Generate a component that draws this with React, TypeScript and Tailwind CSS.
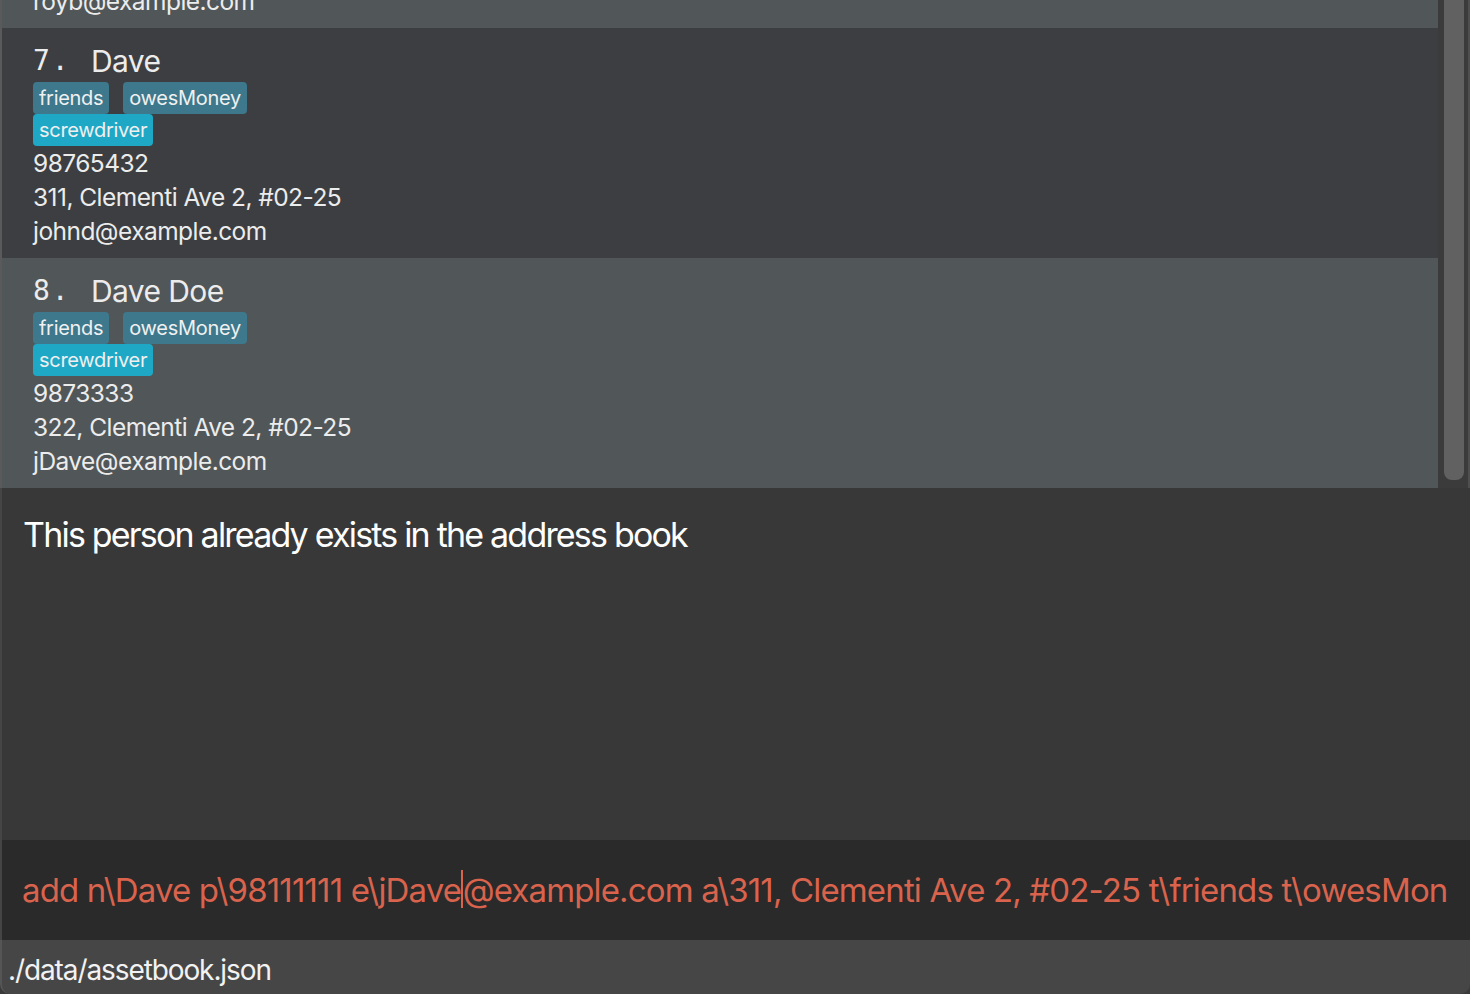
import type { ReactNode } from "react";

type Person = {
  index: number;
  name: string;
  tags: string[][];
  phone: string;
  address: string;
  email: string;
};

const people: Person[] = [
  {
    index: 6,
    name: "Roy Balakrishnan",
    tags: [["colleagues"]],
    phone: "92624417",
    address: "Blk 45 Aljunied Street 85, #11-31",
    email: "royb@example.com",
  },
  {
    index: 7,
    name: "Dave",
    tags: [["friends", "owesMoney"], ["screwdriver"]],
    phone: "98765432",
    address: "311, Clementi Ave 2, #02-25",
    email: "johnd@example.com",
  },
  {
    index: 8,
    name: "Dave Doe",
    tags: [["friends", "owesMoney"], ["screwdriver"]],
    phone: "9873333",
    address: "322, Clementi Ave 2, #02-25",
    email: "jDave@example.com",
  },
];

const font = { fontFamily: "Inter, 'Noto Sans', sans-serif" };

function Tag({ children, bright }: { children: ReactNode; bright?: boolean }) {
  return (
    <span
      className={
        "flex h-8 items-center rounded-[4px] px-[6px] text-[20px] tracking-[-0.3px] text-[#f0f0f0] " +
        (bright ? "bg-[#1fa8c6]" : "bg-[#3e788c]")
      }
    >
      {children}
    </span>
  );
}

function PersonCard({ p, odd }: { p: Person; odd: boolean }) {
  return (
    <div
      className={
        "h-[230px] pl-[31px] pt-[15px] text-[#ececec] " +
        (odd ? "bg-[#515658]" : "bg-[#3c3e41]")
      }
    >
      <div className="flex h-[36px] items-center text-[30px] leading-none">
        <span className="w-[58px] font-['DejaVu_Sans_Mono'] text-[28px] tracking-[2px]">
          {p.index}.
        </span>
        <span className="tracking-[-0.6px]">{p.name}</span>
      </div>
      <div className="mt-[3px] h-[64px]">
        {p.tags.map((row, r) => (
          <div key={r} className="flex gap-[14px]">
            {row.map((t) => (
              <Tag key={t} bright={t === "screwdriver"}>
                {t}
              </Tag>
            ))}
          </div>
        ))}
      </div>
      <div className="text-[24.5px] leading-[34px] tracking-[-0.55px]">
        <div>{p.phone}</div>
        <div>{p.address}</div>
        <div>{p.email}</div>
      </div>
    </div>
  );
}

export default function App() {
  return (
    <div
      className="flex h-[994px] w-[1470px] flex-col overflow-hidden bg-[#3a3a3a]"
      style={font}
    >
      <div className="flex h-[488px] border-l-2 border-r-2 border-l-[#5a5a5a] border-r-[#4f4f4f]">
        <div className="flex-1 overflow-hidden">
          <div className="-mt-[202px]">
            {people.map((p) => (
              <PersonCard key={p.index} p={p} odd={p.index % 2 === 0} />
            ))}
          </div>
        </div>
        <div className="w-[30px] bg-[#3b3b3b] pl-[6px] pr-[4px]">
          <div className="h-[480px] rounded-b-[8px] bg-[#616161]" />
        </div>
      </div>

      <div className="h-[352px] border-l-2 border-[#454545] bg-[#383838] pl-[21px] pt-[27px]">
        <div className="text-[34px] leading-[40px] tracking-[-1.8px] text-white">
          This person already exists in the address book
        </div>
      </div>

      <div className="flex h-[100px] items-center overflow-hidden whitespace-nowrap border-l-2 border-[#454545] bg-[#2a2a2a] pl-[20px] pr-[20px]">
        <div className="overflow-hidden text-[33px] tracking-[-0.85px] text-[#d9634d]">
          add n\Dave p\98111111 e\jDave
          <span className="inline-block h-[38px] w-[1.5px] translate-y-[6px] bg-[#d9634d]" />
          @example.com a\311, Clementi Ave 2, #02-25 t\friends t\owesMon
        </div>
      </div>

      <div className="flex h-[54px] items-center rounded-b-[10px] border-l-2 border-[#555] bg-[#464646] pl-[6px] pt-[6px]">
        <span className="text-[28px] tracking-[-1.1px] text-[#f2f2f2]">
          ./data/assetbook.json
        </span>
      </div>
    </div>
  );
}
